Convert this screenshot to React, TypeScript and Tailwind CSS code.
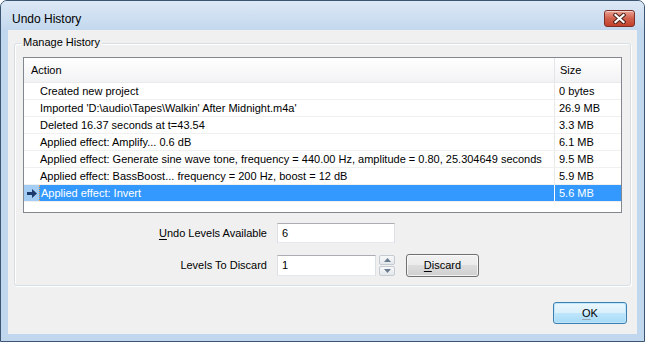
import React from "react";

const rows: { action: string; size: string }[] = [
  { action: "Created new project", size: "0 bytes" },
  { action: "Imported 'D:\\audio\\Tapes\\Walkin' After Midnight.m4a'", size: "26.9 MB" },
  { action: "Deleted 16.37 seconds at t=43.54", size: "3.3 MB" },
  { action: "Applied effect: Amplify... 0.6 dB", size: "6.1 MB" },
  {
    action:
      "Applied effect: Generate sine wave tone, frequency = 440.00 Hz, amplitude = 0.80, 25.304649 seconds",
    size: "9.5 MB",
  },
  { action: "Applied effect: BassBoost... frequency = 200 Hz, boost = 12 dB", size: "5.9 MB" },
  { action: "Applied effect: Invert", size: "5.6 MB" },
];

function CloseGlyph() {
  return (
    <svg width="13" height="11" viewBox="0 0 13 11">
      <path d="M2.5 2 L10.5 9 M10.5 2 L2.5 9" stroke="#4a2019" strokeWidth="4.2" strokeLinecap="square" />
      <path d="M2.5 2 L10.5 9 M10.5 2 L2.5 9" stroke="#ffffff" strokeWidth="2.2" strokeLinecap="square" />
    </svg>
  );
}

function Arrow() {
  return (
    <svg width="11" height="9" viewBox="0 0 11 9">
      <polygon points="0,3 5,3 5,0 10,4.5 5,9 5,6 0,6" fill="#1c3a6b" />
    </svg>
  );
}

export default function App() {
  const font = { fontFamily: '"Liberation Sans", Arial, sans-serif' } as const;
  return (
    <div className="w-[645px] h-[342px] bg-white" style={font}>
      <div className="w-[645px] h-[342px] flex flex-col border border-[#3b5573] rounded-t-[7px] bg-[#c1d7ee] overflow-hidden">
        {/* Title bar */}
        <div className="h-[29px] flex items-start justify-between pl-[11px] pr-[9px] bg-gradient-to-b from-[#dce8f5] to-[#c3d8ee]">
          <div className="mt-[11px] text-[12px] leading-[15px] text-black">Undo History</div>
          <div className="mt-[9px] w-[31px] h-[17px] rounded-[3px] border border-[#7d2f26] bg-gradient-to-b from-[#e9a193] via-[#d0604b] to-[#c2402a] flex items-center justify-center shadow-[inset_0_1px_0_rgba(255,255,255,0.5)]">
            <CloseGlyph />
          </div>
        </div>

        {/* Client area */}
        <div className="flex-1 mx-[7px] mb-[7px] bg-[#f0f0f0] flex flex-col text-[11px] text-black">
          {/* Group box */}
          <div className="relative mt-[13px] mx-[6px] border border-[#d5dfe5] rounded-[3px] shadow-[1px_1px_0_#ffffff,inset_1px_1px_0_#ffffff] pt-[13px] pb-[8px] px-[8px]">
            <div className="absolute left-[6px] top-[-9px] px-[2px] bg-[#f0f0f0] leading-[14px]">Manage History</div>

            {/* List */}
            <div className="h-[156px] border border-[#828790] bg-white flex flex-col">
              <div className="h-[25px] shrink-0 flex bg-gradient-to-b from-white to-[#f2f3f5] border-b border-[#eaeaea]">
                <div className="w-[530px] pl-[7px] flex items-center">Action</div>
                <div className="flex-1 border-l border-[#e3e5e8] pl-[5px] flex items-center">Size</div>
              </div>
              {rows.map((r, i) => {
                const sel = i === rows.length - 1;
                return (
                  <div key={i} className="h-[17px] shrink-0 flex border-b border-[#f0f0f0]">
                    <div className={`w-[15px] flex items-center justify-end pr-[1px] ${sel ? "bg-[#a4cdf4]" : ""}`}>
                      {sel ? <Arrow /> : null}
                    </div>
                    <div
                      className={`w-[515px] pl-[1px] flex items-center whitespace-nowrap overflow-hidden ${
                        sel ? "bg-[#3399ff] text-white border-l border-dotted border-[#f0a050]" : ""
                      }`}
                    >
                      {r.action}
                    </div>
                    <div
                      className={`flex-1 border-l pl-[4px] flex items-center ${
                        sel ? "bg-[#3399ff] text-white border-white" : "border-[#e8e8e8]"
                      }`}
                    >
                      {r.size}
                    </div>
                  </div>
                );
              })}
            </div>

            {/* Controls */}
            <div className="mt-[10px] flex items-center h-[20px]">
              <div className="w-[244px] text-right">
                <span className="underline underline-offset-2">U</span>ndo Levels Available
              </div>
              <div className="ml-[10px] w-[118px] h-[20px] bg-white border border-[#abadb3] border-l-[#dbdfe6] border-r-[#dbdfe6] border-b-[#e3e9ef] pl-[4px] flex items-center">
                6
              </div>
            </div>
            <div className="mt-[11px] flex items-center h-[23px]">
              <div className="w-[244px] text-right">Levels To Discard</div>
              <div className="ml-[10px] w-[99px] h-[21px] bg-white border border-[#abadb3] border-l-[#dbdfe6] border-r-[#dbdfe6] border-b-[#e3e9ef] pl-[4px] flex items-center">
                1
              </div>
              <div className="ml-[3px] w-[16px] h-[21px] flex flex-col gap-[1px]">
                <div className="flex-1 rounded-[2px] border border-[#c5cbd3] bg-gradient-to-b from-[#f7f8f9] to-[#e4e8ec] flex items-center justify-center">
                  <svg width="7" height="4" viewBox="0 0 7 4">
                    <polygon points="0,4 3.5,0 7,4" fill="#6a7b8f" />
                  </svg>
                </div>
                <div className="flex-1 rounded-[2px] border border-[#c5cbd3] bg-gradient-to-b from-[#f7f8f9] to-[#e4e8ec] flex items-center justify-center">
                  <svg width="7" height="4" viewBox="0 0 7 4">
                    <polygon points="0,0 7,0 3.5,4" fill="#6a7b8f" />
                  </svg>
                </div>
              </div>
              <div className="ml-[11px] w-[73px] h-[23px] rounded-[3px] border border-[#707070] bg-[linear-gradient(to_bottom,#f2f2f2_0%,#ebebeb_50%,#dddddd_50%,#cfcfcf_100%)] shadow-[inset_0_0_0_1px_rgba(255,255,255,0.7)] flex items-center justify-center">
                <span>
                  <span className="underline underline-offset-2">D</span>iscard
                </span>
              </div>
            </div>
          </div>

          {/* Bottom button row */}
          <div className="mt-[16px] flex justify-end pr-[10px]">
            <div className="w-[74px] h-[22px] rounded-[3px] border border-[#3c7fb1] bg-[linear-gradient(to_bottom,#eaf6fd_0%,#d9f0fc_50%,#bee6fd_50%,#a7d9f5_100%)] shadow-[inset_0_0_0_1px_#bfe6fb] flex items-center justify-center">
              <span>
                <span className="underline underline-offset-2 decoration-[#9aa7b3]">O</span>K
              </span>
            </div>
          </div>
        </div>
      </div>
    </div>
  );
}
